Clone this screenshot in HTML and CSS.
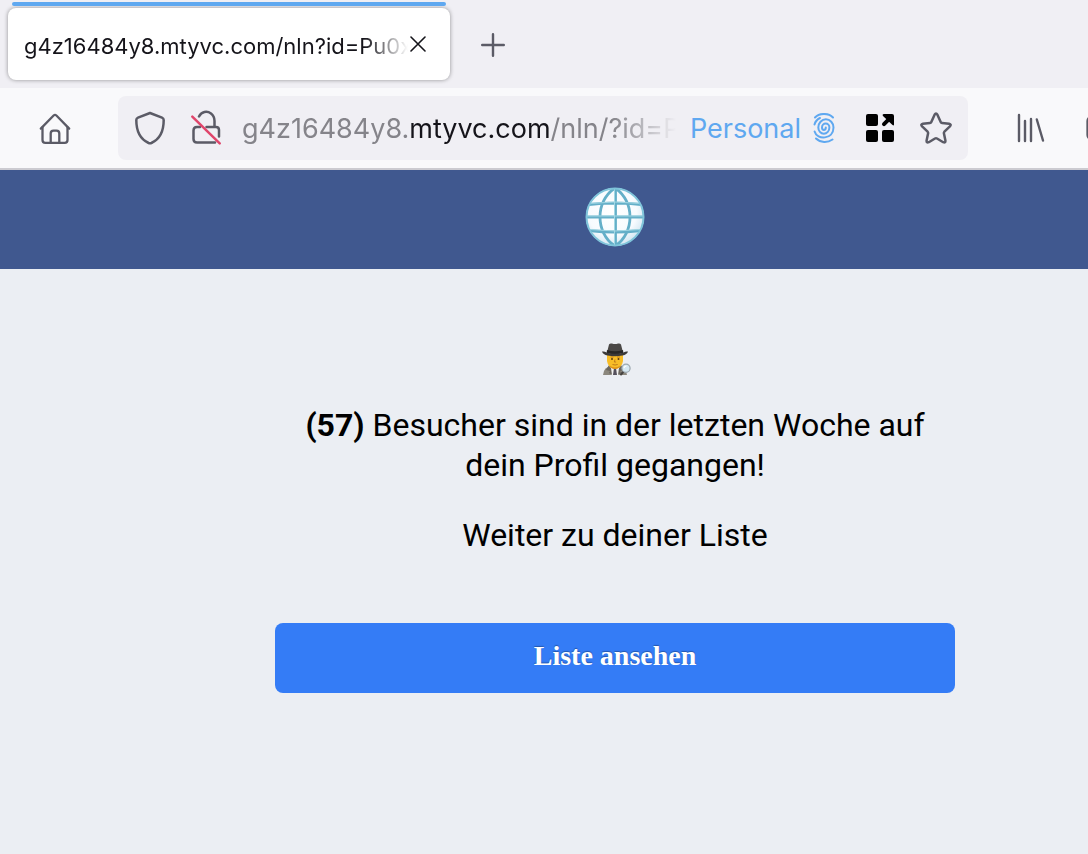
FILE: index.html
```
<!DOCTYPE html>
<html lang="de">
<head>
<meta charset="utf-8">
<title>g4z16484y8.mtyvc.com</title>
<link rel="stylesheet" href="styles.css">
</head>
<body>
<div class="tabstrip">
  <div class="tab">
    <span class="tab-title">g4z16484y8.mtyvc.com/nln?id=Pu0x</span>
    <button class="icon-button tab-close" type="button" aria-label="Tab schließen">
      <svg width="16" height="16" viewBox="0 0 16 16" fill="none" stroke="#15141a" stroke-width="1.6" stroke-linecap="round"><path d="M1 1l14 14M15 1L1 15"/></svg>
    </button>
  </div>
  <button class="icon-button new-tab" type="button" aria-label="Neuer Tab">
    <svg width="24" height="24" viewBox="0 0 24 24" fill="none" stroke="#5b5b66" stroke-width="2.4" stroke-linecap="round"><path d="M12 1.2v21.6M1.2 12h21.6"/></svg>
  </button>
</div>
<div class="toolbar">
  <button class="icon-button home" type="button" aria-label="Startseite">
    <svg width="32" height="32" viewBox="0 0 32 32" fill="none" stroke="#5b5b66" stroke-width="2.3" stroke-linecap="round" stroke-linejoin="round"><path d="M1.8 16.600L14.600 3.500q1.400-1.200 2.800 0L30.200 16.600"/><path d="M3.500 15.500V28q0 2.800 2.800 2.800H25.700q2.800 0 2.800-2.800V15.500"/><path d="M11.700 30.500V21.500q0-2.800 2.800-2.800h3q2.800 0 2.800 2.800V30.500"/></svg>
  </button>
  <div class="urlbar">
    <button class="icon-button shield" type="button" aria-label="Schutz">
      <svg width="32" height="34" viewBox="0 0 32 34" fill="none" stroke="#5b5b66" stroke-width="2.5" stroke-linejoin="round"><path d="M16 2L28 6.600q1.700.7 1.700 2.400C29.700 20 25.500 28.300 17.400 32q-1.400.6-2.800 0C6.500 28.300 2.300 20 2.300 9q0-1.700 1.700-2.400z"/></svg>
    </button>
    <button class="icon-button" type="button" aria-label="Verbindung nicht sicher">
      <svg width="32" height="36" viewBox="0 0 32 36" fill="none" stroke-width="2.5" stroke-linecap="round" stroke-linejoin="round"><g stroke="#5b5b66"><path d="M9 6.500C11.500 1.500 17 .5 21 3.500q3.500 2.800 3.500 7.500v5.500"/><path d="M16.500 17H26q3 0 3 3v6.500"/><path d="M10 16.900H7q-3.500 0-3.500 3.500V29q0 3.500 3.500 3.500h18"/></g><path stroke="#e0456b" d="M2.300 6.700L29.700 33.300"/></svg>
    </button>
    <div class="url" role="textbox" aria-label="Adresse" tabindex="0">g4z16484y8.<span class="domain">mtyvc.com</span>/nln/?id=P</div>
    <span class="container-name">Personal</span>
    <svg class="fingerprint" width="22" height="30" viewBox="0 0 22 30" fill="none" stroke="#5fa8f0" stroke-width="2" stroke-linecap="round"><path d="M2 4.500C6.500-.2 15.500-.2 20 4.500"/><path d="M12.800 14.500A1.900 2.400 0 0 1 9 14.500A3.700 4 0 0 1 16.400 14.500A5.500 6.200 0 0 1 5.300 14.500A7.600 8.200 0 0 1 20.500 14.500C20.500 26.500 4 27.500 1.600 18.500"/><path d="M1.500 11.500C2.300 8.500 4.300 6.300 7 5"/><path d="M3 25.500C7.500 29.800 14.500 30 19.500 26.500"/></svg>
    <button class="icon-button apps" type="button" aria-label="In Container öffnen">
      <svg width="28" height="28" viewBox="0 0 28 28" fill="#000"><rect width="12" height="12" rx="2"/><rect y="16" width="12" height="12" rx="2"/><rect x="16" y="16" width="12" height="12" rx="2"/><path d="M18 0H26q2 0 2 2v8.500q-.2 1.700-1.500.5L17 2Q15.800.4 18 0z"/><path d="M18 10.200L25 3.200" stroke="#000" stroke-width="4" stroke-linecap="round"/></svg>
    </button>
    <button class="icon-button star" type="button" aria-label="Lesezeichen">
      <svg width="32" height="32" viewBox="0 0 32 32" fill="none" stroke="#5b5b66" stroke-width="2.5" stroke-linejoin="round"><path d="M14.600 2.700q1.400-2.400 2.800 0l3.300 7.300q.4.900 1.400 1l7 .8q2.600.5.800 2.500l-5.500 5.400q-.6.700-.5 1.600l1.500 7.300q.2 2.700-2.200 1.600l-6.200-3.700q-1-.5-2 0L8.800 30.200q-2.400 1.100-2.200-1.600L8.100 21.300q.1-.9-.5-1.600L2.100 14.300q-1.800-2 .8-2.500l7-.8q1-.1 1.400-1z"/></svg>
    </button>
  </div>
  <button class="icon-button library" type="button" aria-label="Bibliothek">
    <svg width="28" height="30" viewBox="0 0 28 30" fill="none" stroke="#5b5b66" stroke-width="2.4" stroke-linecap="round"><path d="M2 2v26M8 8v20M14 6v22M19.800 6.500L26 27.500"/></svg>
  </button>
  <button class="icon-button pocket" type="button" aria-label="Pocket">
    <svg width="30" height="28" viewBox="0 0 30 28" fill="none" stroke="#5b5b66" stroke-width="2.300"><rect x="1.500" y="3" width="27" height="22" rx="4"/></svg>
  </button>
</div>
<div class="viewport">
  <div class="page">
    <header class="banner">
      <svg width="60" height="60" viewBox="0 0 60 60" role="img" aria-label="Globus">
        <defs>
          <radialGradient id="sea" cx=".45" cy=".4" r=".65"><stop offset="0" stop-color="#fff"/><stop offset=".65" stop-color="#f7fbfe"/><stop offset="1" stop-color="#c9e2ef"/></radialGradient>
          <clipPath id="disc"><circle cx="30" cy="30" r="28.500"/></clipPath>
        </defs>
        <circle cx="30" cy="30" r="29" fill="url(#sea)"/>
        <g clip-path="url(#disc)" fill="none" stroke="#64afc8" stroke-width="2.800"><path d="M30.500 0v60M0 30h60M4 17.500q26-3 52 0M4 43.500q26 3 52 0"/><path d="M30 1C10 14 10 46 30 59M30 1c20 13 20 45 0 58"/></g>
        <g clip-path="url(#disc)" fill="none" stroke="#a8dbe6" stroke-width=".9"><path d="M29.500 0v60M0 29h60M4 16.500q26-3 52 0M4 42.500q26 3 52 0"/></g>
        <circle cx="30" cy="30" r="28.500" fill="none" stroke="#7fc4da" stroke-width="2"/>
      </svg>
    </header>
    <main class="content">
      <svg class="detective" width="32" height="40" viewBox="0 0 32 40" role="img" aria-label="Detektiv">
        <path d="M4 36l1-4q1-3 4-4l7-2 7 2q4 1 4 4l1 4z" fill="#8b877d"/>
        <path d="M11 27l5 3 5-3-1 9h-8z" fill="#f2f2f0"/>
        <path d="M15 29h2l1 7h-4z" fill="#55515c"/>
        <path d="M10 26l-3 5 4 1-1 2 3 2-1-7zM22 26l3 5-4 1 1 2-3 2 1-7z" fill="#6b665e"/>
        <path d="M8 15h16v7q-1 7-8 8-7-1-8-8z" fill="#f8bd27"/>
        <path d="M10.500 26.500q5.500 4 11 0-2 3.500-5.500 3.500t-5.500-3.500z" fill="#dc8e18"/>
        <circle cx="13" cy="20" r="1" fill="#5c3b13"/><circle cx="19.500" cy="20" r="1" fill="#5c3b13"/>
        <path d="M11.500 18h3M18 18h3M13.500 25.500q2.600 1 5.200 0M16 20.500l-.7 2.500h1.800" fill="none" stroke="#b87518" stroke-width=".9"/>
        <path d="M8 13.500l2-8q1-1.500 3-.9 3 1 6 0 2-.6 3 .9l2 8z" fill="#4a4846"/>
        <path d="M8 11q8 2.500 16 0l.4 3q-8.500 2.500-16.800 0z" fill="#282726"/>
        <path d="M3 12.500q2.500-.5 4.500 1 8.500 2.500 17 0 2-1.500 4.500-1-1 3.200-5.500 4-7.500 1.500-15 0-4.500-.8-5.500-4z" fill="#3b3938"/>
        <path d="M22 35.500l2.500-3" stroke="#45423f" stroke-width="2" stroke-linecap="round"/>
        <circle cx="27" cy="29.300" r="4.100" fill="#d5e8f2" stroke="#9ba7ae" stroke-width="1.200"/>
        <path d="M25 29q.5-2 2.500-2" fill="none" stroke="#fff" stroke-width="1.100"/>
      </svg>
      <p class="message"><strong>(57)</strong> Besucher sind in der letzten Woche auf dein Profil gegangen!</p>
      <p class="message">Weiter zu deiner Liste</p>
      <button class="cta" type="button">Liste ansehen</button>
    </main>
  </div>
</div>
</body>
</html>
```

FILE: styles.css
```
* { box-sizing: border-box; }

body {
  margin: 0;
  min-height: 100vh;
  display: flex;
  flex-direction: column;
  overflow-x: hidden;
  background: #ebeef3;
  font-family: Roboto, sans-serif;
}

.icon-button {
  display: flex;
  flex: none;
  padding: 0;
  border: 0;
  background: none;
}

svg { display: block; flex: none; }

.tabstrip {
  display: flex;
  align-items: center;
  gap: 31px;
  padding: 8px;
  background: #f0eff4;
}

.new-tab { padding-top: 2px; }

.tab {
  position: relative;
  display: flex;
  align-items: center;
  width: 442px;
  height: 72px;
  padding: 0 24px 0 16px;
  border-radius: 8px;
  background: #fff;
  box-shadow: 0 0 4px rgba(0, 0, 0, 0.4);
  font-family: Inter, sans-serif;
  font-size: 22px;
  color: #15141a;
}

.tab::before {
  content: "";
  position: absolute;
  top: -6px;
  left: 4px;
  right: 4px;
  height: 4px;
  border-radius: 2px;
  background: #5fa8f0;
}

.tab-title {
  flex: 1;
  overflow: hidden;
  white-space: nowrap;
  line-height: 32px;
  padding-top: 4px;
  mask-image: linear-gradient(to left, transparent, #000 44px);
}

.tab-close { margin-left: 2px; }

.toolbar {
  display: flex;
  align-items: center;
  height: 82px;
  padding: 8px 0 8px 39px;
  overflow: hidden;
  background: #f9f9fb;
  border-bottom: 2px solid #cccbd1;
}

.urlbar {
  display: flex;
  align-items: center;
  flex: 1;
  min-width: 0;
  height: 64px;
  margin: 0 49px 0 47px;
  padding: 0 16px;
  border-radius: 8px;
  background: #f0eff4;
  font-family: Inter, sans-serif;
  font-size: 27px;
  line-height: 40px;
}

.shield { margin-right: 24px; }

.url {
  flex: 1;
  min-width: 0;
  margin-left: 20px;
  padding-top: 2px;
  overflow: hidden;
  white-space: nowrap;
  color: #85848a;
  mask-image: linear-gradient(to left, transparent, #000 64px);
}

.domain { color: #15141a; }

.container-name {
  margin-left: 14px;
  padding-top: 2px;
  color: #5fa8f0;
}

.fingerprint { margin-left: 12px; }
.apps { margin-left: 31px; }
.star { margin-left: 26px; }
.pocket { margin: 0 -28px 0 41px; }

.viewport { overflow: hidden; }

/* The page is wider than the window and is cut off on the right. */
.page { width: calc(100% + 142px); }

.banner {
  display: flex;
  justify-content: center;
  padding: 17px 0 22px;
  background: #40588f;
}

.content {
  display: flex;
  flex-direction: column;
  align-items: center;
  max-width: 680px;
  margin: 0 auto;
  padding: 70px 0;
}

.message {
  margin: 0 0 30px;
  padding: 0 24px;
  font-size: 32px;
  line-height: 40px;
  text-align: center;
  color: #000;
}

.detective { margin-bottom: 26px; }

.cta {
  width: 100%;
  margin-top: 38px;
  padding: 17px 20px 21px;
  border: 0;
  border-radius: 8px;
  background: #347cf6;
  color: #fff;
  font-family: "Liberation Serif", serif;
  font-size: 28px;
  font-weight: 700;
  line-height: 32px;
  text-shadow: 0 -1px 1px rgba(0, 0, 0, 0.3);
}
```
